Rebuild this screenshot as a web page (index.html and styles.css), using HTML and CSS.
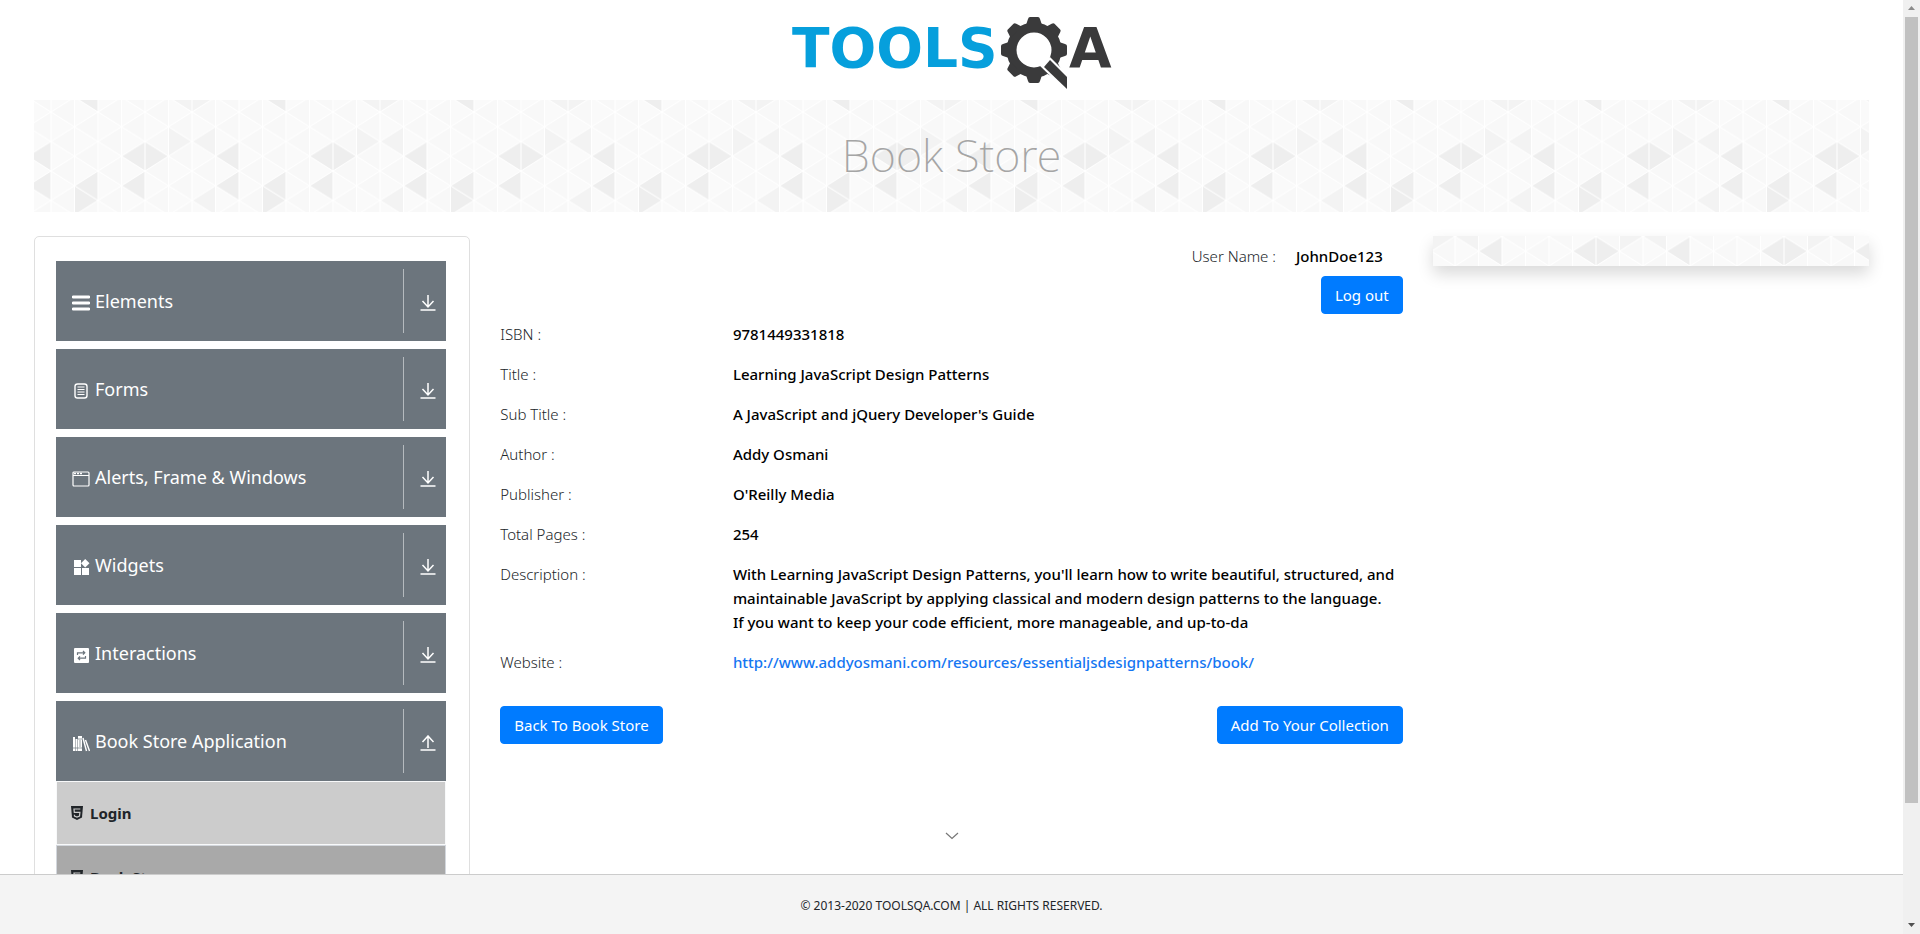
FILE: index.html
```html
<!DOCTYPE html>
<html lang="en">
<head>
<meta charset="utf-8">
<title>ToolsQA - Book Store</title>
<link rel="stylesheet" href="styles.css">
</head>
<body>
<svg class="defs" width="0" height="0" aria-hidden="true">
  <symbol id="down" viewBox="0 0 16 16"><path d="M8 0v12M2.500 6L8 12l5.500-6M.5 15h15" fill="none" stroke="currentColor" stroke-width="1.500"/></symbol>
  <symbol id="up" viewBox="0 0 16 16"><path d="M8 13V1M2.500 7L8 1l5.500 6M.5 15h15" fill="none" stroke="currentColor" stroke-width="1.500"/></symbol>
  <symbol id="html5" viewBox="0 0 12 14"><path d="M0 0h12l-1 11.500L6 14l-5-2.500z" fill="currentColor"/><path d="M9.300 3H3l.3 3.300h5.600L8.500 10 6 11l-2.500-1-.1-1.300" fill="none" stroke="#ccc" stroke-width="1.200"/></symbol>
</svg>
<div class="page">
  <header class="top">
    <a href="#" aria-label="TOOLSQA">
      <svg class="logo" viewBox="0 0 322 76" width="322" height="76">
        <text x="1" y="53" class="logo-tools">TOOLS</text>
        <g fill="#3a3a3b">
          <g transform="translate(243 36)">
            <circle r="22.500" fill="none" stroke="#3a3a3b" stroke-width="10"/>
            <g id="teeth">
              <path d="M-8-25l2-6q.5-2 2-2h8q1.500 0 2 2l2 6z"/>
              <path d="M-8-25l2-6q.5-2 2-2h8q1.500 0 2 2l2 6z" transform="rotate(45)"/>
              <path d="M-8-25l2-6q.5-2 2-2h8q1.500 0 2 2l2 6z" transform="rotate(90)"/>
              <path d="M-8-25l2-6q.5-2 2-2h8q1.500 0 2 2l2 6z" transform="rotate(135)"/>
              <path d="M-8-25l2-6q.5-2 2-2h8q1.500 0 2 2l2 6z" transform="rotate(180)"/>
              <path d="M-8-25l2-6q.5-2 2-2h8q1.500 0 2 2l2 6z" transform="rotate(225)"/>
              <path d="M-8-25l2-6q.5-2 2-2h8q1.500 0 2 2l2 6z" transform="rotate(270)"/>
              <path d="M-8-25l2-6q.5-2 2-2h8q1.500 0 2 2l2 6z" transform="rotate(315)"/>
            </g>
          </g>
          <path d="M259 43L278 62V80L248 51z" fill="#fff"/>
          <path d="M259 46l17 17v12l-23-22z"/>
        </g>
        <text x="278" y="53" class="logo-a">A</text>
      </svg>
    </a>
  </header>
  <div class="content">
    <div class="banner"><h1>Book Store</h1></div>
    <div class="columns">
      <nav class="sidebar">
        <button class="group"><svg class="gicon" viewBox="0 0 18 18"><path d="M1 3h16M1 9h16M1 15h16" stroke="currentColor" stroke-width="2.800" stroke-linecap="round"/></svg><span>Elements</span><i><svg><use href="#down"/></svg></i></button>
        <button class="group"><svg class="gicon" viewBox="0 0 18 18"><rect x="3" y="2" width="12" height="14" rx="2.500" fill="none" stroke="currentColor" stroke-width="1.400"/><path d="M5.500 5h7M5.500 7.500h7M5.500 10h7M5.500 12.500h7" stroke="currentColor"/></svg><span>Forms</span><i><svg><use href="#down"/></svg></i></button>
        <button class="group"><svg class="gicon" viewBox="0 0 18 18"><rect x="1" y="2" width="16" height="14" rx="1" fill="none" stroke="currentColor" stroke-width="1.200"/><path d="M1 5.500h16" stroke="currentColor"/><path d="M2 3.500h8" stroke="currentColor" stroke-width="1.500" stroke-dasharray="2 1"/></svg><span>Alerts, Frame &amp; Windows</span><i><svg><use href="#down"/></svg></i></button>
        <button class="group"><svg class="gicon" viewBox="0 0 18 18"><path d="M2 2h7v7H2zM2 10h7v7H2zM10 10h7v7h-7zM13.200 1l4.300 4.300-4.300 4.300L9 5.300z" fill="currentColor"/></svg><span>Widgets</span><i><svg><use href="#down"/></svg></i></button>
        <button class="group"><svg class="gicon" viewBox="0 0 18 18"><rect x="2" y="2" width="15" height="15" rx="1" fill="currentColor"/><path d="M5.500 9V6.800h7M11 5l1.800 1.800L11 8.600M13.500 10v2.200h-7M8 10.400l-1.800 1.800L8 14" fill="none" stroke="#6c757d" stroke-width="1.200"/></svg><span>Interactions</span><i><svg><use href="#down"/></svg></i></button>
        <button class="group"><svg class="gicon" viewBox="0 0 18 18"><path d="M1 3h2v14H1zM3.500 5h2v12h-2zM6 2h4v15H6z" fill="currentColor"/><path d="M11 4l3.500 13M13.500 6L17.500 17" stroke="currentColor" stroke-width="1.400"/><path d="M1 14h9M6 5h4M8 6v7" stroke="#6c757d" stroke-width=".7"/></svg><span>Book Store Application</span><i><svg><use href="#up"/></svg></i></button>
        <ul class="sub">
          <li><a href="#"><svg><use href="#html5"/></svg>Login</a></li>
          <li class="active"><a href="#"><svg><use href="#html5"/></svg>Book Store</a></li>
        </ul>
      </nav>
      <main class="book">
        <p class="user"><span>User Name :</span><b>JohnDoe123</b></p>
        <div class="logout"><button class="btn">Log out</button></div>
        <dl>
          <dt>ISBN :</dt><dd>9781449331818</dd>
          <dt>Title :</dt><dd>Learning JavaScript Design Patterns</dd>
          <dt>Sub Title :</dt><dd>A JavaScript and jQuery Developer's Guide</dd>
          <dt>Author :</dt><dd>Addy Osmani</dd>
          <dt>Publisher :</dt><dd>O'Reilly Media</dd>
          <dt>Total Pages :</dt><dd>254</dd>
          <dt>Description :</dt><dd>With Learning JavaScript Design Patterns, you'll learn how to write beautiful, structured, and maintainable JavaScript by applying classical and modern design patterns to the language. If&nbsp;you want to keep your code efficient, more manageable, and up-to-da</dd>
          <dt>Website :</dt><dd><a href="#">http://www.addyosmani.com/resources/essentialjsdesignpatterns/book/</a></dd>
        </dl>
        <div class="actions"><button class="btn">Back To Book Store</button><button class="btn">Add To Your Collection</button></div>
        <svg class="chevron" viewBox="0 0 14 8"><path d="M1 1l6 5.500L13 1" fill="none" stroke="#777" stroke-width="1.200"/></svg>
      </main>
      <aside class="strip"></aside>
    </div>
  </div>
  <footer>© 2013-2020 TOOLSQA.COM | ALL RIGHTS RESERVED.</footer>
</div>
<div class="scrollbar" aria-hidden="true">
  <svg viewBox="0 0 17 17"><path d="M5 10l3.500-4 3.500 4z" fill="#8b8b8b"/></svg>
  <div class="track"><div class="thumb"></div></div>
  <svg viewBox="0 0 17 17"><path d="M5 6h7l-3.500 4z" fill="#505050"/></svg>
</div>
</body>
</html>
```
FILE: styles.css
```css
* { box-sizing: border-box; }
body {
  margin: 0;
  height: 100vh;
  display: grid;
  grid-template-columns: minmax(0, 1fr) 17px;
  overflow: hidden;
  background: #fff;
  color: #212529;
  font: 350 15px/24px "Noto Sans", "Open Sans", sans-serif;
}
button { font: inherit; cursor: pointer; }
a { text-decoration: none; }
.defs { position: absolute; }
.page { height: 100vh; display: flex; flex-direction: column; }
.top { flex: none; height: 100px; padding-top: 14px; text-align: center; }
.logo { display: inline-block; overflow: visible; }
.logo text { font: bold 55px "DejaVu Sans", sans-serif; }
.logo-tools { fill: #069fdc; }
.logo-a { fill: #3a3a3b; }
.content { flex: 1; min-height: 0; overflow: hidden; padding: 0 34px; }

.banner, .strip {
  background-color: #fafafa;
  background-image: url("data:image/svg+xml,%3Csvg xmlns='http://www.w3.org/2000/svg' width='188' height='118'%3E%3Cdefs%3E%3Cpattern id='a' y='12' width='47' height='29.5' patternUnits='userSpaceOnUse'%3E%3Cpath fill='%23f8f8f8' d='M0 0l23.5-14.75v29.5zM0 29.5l23.5-14.75v29.5zM23.5 14.75L47 0v29.5z'/%3E%3C/pattern%3E%3Cpattern id='b' y='12' width='47' height='29.5' patternUnits='userSpaceOnUse'%3E%3Cpath stroke='%23fff' stroke-width='1' fill='none' d='M0 0l47 29.5M0 29.5L47 0M0 0v29.5M23.5 0v29.5M47 0v29.5'/%3E%3C/pattern%3E%3C/defs%3E%3Cpath fill='%23fafafa' d='M0 0h188v118H0z'/%3E%3Cpath fill='url(%23a)' d='M0 0h188v118H0z'/%3E%3Cpath fill='%23eeeeee' d='M164.5 56.25l23.5-14.75v29.5zM164.5 85.75l23.5-14.75v29.5zM23.5 85.75l23.5-14.75v29.5zM23.5 85.75v29.5l23.5-14.75zM70.5 56.25l23.5-14.75v29.5zM94 41.5v29.5l23.5-14.75zM70.5 85.75l23.5-14.75v29.5zM23.5-2.75L47-17.5v29.5z'/%3E%3Cpath fill='%23f3f3f3' d='M117.5 26.75v29.5l23.5-14.75zM141 41.5l23.5-14.75v29.5zM141 100.5l23.5-14.75v29.5zM117.5-2.75L141-17.5v29.5zM141-17.5v29.5l23.5-14.75z'/%3E%3Cpath fill='url(%23b)' d='M0 0h188v118H0z'/%3E%3C/svg%3E");
}
.banner {
  height: 112px;
  display: flex;
  justify-content: center;
  padding-top: 27px;
  background-position: 17px 0;
}
h1 { margin: 0; font-weight: 250; font-size: 45px; line-height: 56px; color: #a5a5a5; }
.columns { display: grid; grid-template-columns: repeat(4, minmax(0, 1fr)); gap: 30px; padding-top: 24px; align-items: start; }

.sidebar {
  min-height: 900px;
  border: 1px solid #dfdfdf;
  border-radius: 5px;
  padding: 24px 23px 24px 21px;
  display: flex;
  flex-direction: column;
  gap: 8px;
}
.group {
  height: 80px;
  flex: none;
  display: flex;
  align-items: center;
  gap: 5px;
  padding: 8px 10px 8px 16px;
  border: 0;
  background: #6c757d;
  color: #fff;
  font-size: 18px;
  font-weight: 400;
  text-align: left;
}
.gicon { width: 18px; height: 18px; margin-top: 4px; }
.group span { flex: 1; }
.group i { display: flex; align-items: center; height: 64px; padding-left: 16px; border-left: 1px solid #b5babe; }
.group i svg { width: 16px; height: 16px; margin-top: 4px; }
.sub { list-style: none; margin: -8px 0 0; padding: 0; font-weight: 700; }
.sub a { display: flex; align-items: center; gap: 7px; height: 64px; padding: 0 14px; border: 1px solid #f8f9fa; background: #ccc; color: #212529; }
.sub svg { width: 12px; height: 14px; }
.sub .active a { background: #a9a9a9; border-color: #d3d7dd; }

.book { grid-column: span 2; display: flex; flex-direction: column; padding-top: 8px; }
.user { display: flex; justify-content: flex-end; gap: 20px; margin: 0; padding-right: 20px; }
.user b, dd { font-weight: 500; color: #000; }
.logout { display: flex; justify-content: flex-end; padding: 8px 0; }
.btn { height: 38px; padding: 0 13px; border: 1px solid #007bff; border-radius: 4px; background: #007bff; color: #fff; font-weight: 400; }
dl { margin: 0; display: grid; grid-template-columns: 1fr 3fr; row-gap: 16px; }
dt, dd { margin: 0; }
dt { padding-right: 15px; }
dd { padding-left: 7px; }
dd a { color: #1476f2; }
.actions { display: flex; justify-content: space-between; padding-top: 32px; }
.chevron { width: 14px; height: 8px; align-self: center; margin-top: 88px; }
.strip { height: 30px; background-position: 69px -41px; box-shadow: 0 8px 16px rgba(0, 0, 0, .15); }

footer { flex: none; height: 60px; border-top: 1px solid #ccc; background: #f4f4f4; text-align: center; font-weight: 400; font-size: 12px; line-height: 61px; }

.scrollbar { height: 100vh; background: #f0f0f0; display: flex; flex-direction: column; }
.scrollbar svg { width: 17px; height: 17px; flex: none; }
.track { flex: 1; padding: 0 2px; }
.thumb { height: 87.3%; background: #c1c1c1; }
```
